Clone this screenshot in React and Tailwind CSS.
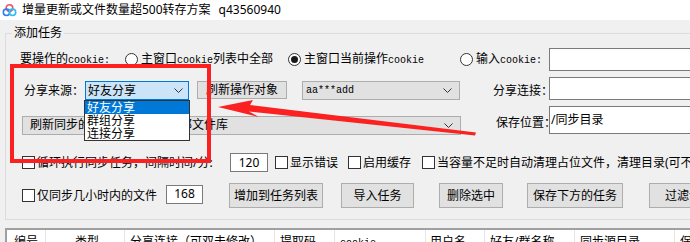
import React from "react";

const Mono = ({ children }) => (
  <span className="font-['Liberation_Mono'] text-[10px]">{children}</span>
);

const Chevron = () => (
  <svg width="9" height="5" viewBox="0 0 9 5" className="shrink-0">
    <polyline points="0.5,0.5 4.5,4.5 8.5,0.5" fill="none" stroke="#333" strokeWidth="1" />
  </svg>
);

const Radio = ({ checked, w, children }) => (
  <div className={`flex items-center shrink-0 ${w}`}>
    <span className="w-[13px] h-[13px] rounded-full border border-[#333] bg-white flex items-center justify-center shrink-0">
      {checked && <span className="w-[7px] h-[7px] rounded-full bg-[#1a1a1a]" />}
    </span>
    <span className="ml-[3px] whitespace-nowrap">{children}</span>
  </div>
);

const Check = ({ w, children }) => (
  <div className={`flex items-center shrink-0 ${w}`}>
    <span className="w-[13px] h-[13px] border border-[#333] bg-white shrink-0" />
    <span className="ml-[2px] whitespace-nowrap">{children}</span>
  </div>
);

const Btn = ({ cls, children }) => (
  <div className={`shrink-0 border border-[#adadad] bg-[#e1e1e1] flex items-center justify-center whitespace-nowrap ${cls}`}>
    {children}
  </div>
);

const headers = [
  { t: "编号", cls: "w-[39px] pl-[7px]" },
  { t: "类型", cls: "w-[79px] pl-[29px]" },
  { t: "分享连接（可双击修改）", cls: "w-[150px] pl-[5px]" },
  { t: "提取码", cls: "w-[60px] pl-[5px]" },
  { t: "cookie", cls: "w-[91px] pl-[5px]" },
  { t: "用户名", cls: "w-[59px] pl-[4px]" },
  { t: "好友/群名称", cls: "w-[90px] pl-[5px]" },
  { t: "同步源目录", cls: "w-[100px] pl-[5px]" },
  { t: "保存位置", cls: "w-[100px] pl-[5px]" },
];

export default function App() {
  return (
    <div className="relative w-[690px] h-[242px] overflow-hidden bg-[#f0f0f0] text-[12px] leading-[16px] text-black font-['Noto_Sans','Noto_Sans_CJK_SC',sans-serif]">
      {/* title bar */}
      <div className="h-[20px] bg-white flex items-center">
        <svg width="15" height="14" viewBox="0 0 15 14" className="ml-[2px]">
          <circle cx="7.5" cy="5" r="3.3" fill="none" stroke="#f0506e" strokeWidth="1.6" />
          <circle cx="4.5" cy="9.3" r="3.2" fill="none" stroke="#2b7ff2" strokeWidth="1.6" />
          <circle cx="10.5" cy="9.3" r="3.2" fill="none" stroke="#29c0f0" strokeWidth="1.6" />
        </svg>
        <span className="ml-[5px] whitespace-nowrap">增量更新或文件数量超500转存方案</span>
        <span className="ml-[8px]">q43560940</span>
      </div>

      {/* group box */}
      <fieldset className="ml-[5px] mt-[5px] w-[720px] border border-[#dcdcdc] pb-[11px] min-w-0">
        <legend className="ml-[6px] px-[2px] leading-[16px]">添加任务</legend>

        <div className="mt-[7px] h-[23px] flex items-center">
          <div className="ml-[14px] w-[105px] shrink-0 whitespace-nowrap">
            要操作的<Mono>cookie:</Mono>
          </div>
          <Radio w="w-[163px]">
            主窗口<Mono>cookie</Mono>列表中全部
          </Radio>
          <Radio w="w-[172px]" checked>
            主窗口当前操作<Mono>cookie</Mono>
          </Radio>
          <Radio w="w-[89px]">
            输入<Mono>cookie:</Mono>
          </Radio>
          <div className="w-[200px] h-[23px] shrink-0 bg-white border border-[#7a7a7a]" />
        </div>

        <div className="mt-[6px] h-[23px] flex items-end">
          <div className="ml-[18px] w-[61px] h-[19px] shrink-0 flex items-center whitespace-nowrap">分享来源：</div>
          <div className="w-[104px] h-[19px] shrink-0 bg-[#cce4f7] border border-[#0078d7] flex items-center justify-between pl-[2px] pr-[5px]">
            <span>好友分享</span>
            <Chevron />
          </div>
          <Btn cls="ml-[8px] w-[90px] h-[18px] mb-[1px]">刷新操作对象</Btn>
          <div className="ml-[15px] w-[158px] h-[19px] shrink-0 bg-[#e1e1e1] border border-[#adadad] flex items-center justify-between pl-[3px] pr-[7px]">
            <Mono>aa***add</Mono>
            <Chevron />
          </div>
          <div className="ml-[33px] w-[56px] h-[19px] shrink-0 flex items-center whitespace-nowrap">分享连接：</div>
          <div className="w-[200px] h-[23px] shrink-0 bg-white border border-[#7a7a7a]" />
        </div>

        <div className="mt-[6px] h-[29px] flex items-end">
          <div className="ml-[16px] w-[439px] h-[19px] shrink-0 bg-[#e1e1e1] border border-[#adadad] flex items-center justify-between pl-[7px] pr-[7px]">
            <span className="whitespace-nowrap">
              刷新同步的<Mono> cookie</Mono>的网盘全部文件库
            </span>
            <Chevron />
          </div>
          <div className="ml-[35px] w-[53px] h-[16px] mb-[4px] shrink-0 whitespace-nowrap">保存位置：</div>
          <div className="w-[200px] h-[28px] mb-[1px] shrink-0 bg-white border border-[#7a7a7a] flex items-center pl-[1px]">
            /同步目录
          </div>
        </div>

        <div className="mt-[18px] h-[19px] flex items-center">
          <div className="ml-[16px] flex shrink-0">
            <Check w="w-[208px]">循环执行同步任务，间隔时间/分:</Check>
          </div>
          <div className="w-[38px] h-[19px] shrink-0 bg-white border border-[#7a7a7a] flex items-center justify-center">120</div>
          <div className="ml-[7px] flex shrink-0">
            <Check w="w-[73px]">显示错误</Check>
            <Check w="w-[74px]">启用缓存</Check>
            <Check w="w-[300px]">当容量不足时自动清理占位文件，清理目录(可不填)</Check>
          </div>
        </div>

        <div className="mt-[11px] h-[25px] flex items-center">
          <div className="ml-[16px] flex shrink-0">
            <Check w="w-[144px]">仅同步几小时内的文件</Check>
          </div>
          <div className="w-[37px] h-[19px] mb-[3px] shrink-0 bg-white border border-[#7a7a7a] flex items-center justify-center">168</div>
          <Btn cls="ml-[26px] w-[94px] h-[25px]">增加到任务列表</Btn>
          <Btn cls="ml-[18px] w-[73px] h-[25px]">导入任务</Btn>
          <Btn cls="ml-[25px] w-[64px] h-[25px]">删除选中</Btn>
          <Btn cls="ml-[24px] w-[96px] h-[25px]">保存下方的任务</Btn>
          <Btn cls="ml-[26px] w-[80px] h-[25px]">过滤设置</Btn>
        </div>
      </fieldset>

      {/* task list header */}
      <div className="ml-[5px] mt-[8px] w-[720px] border-t-2 border-l-2 border-[#a0a0a0] bg-white flex h-[24px]">
        {headers.map((h) => (
          <div key={h.t} className={`shrink-0 border-r border-[#e5e5e5] pt-[4px] whitespace-nowrap ${h.cls}`}>
            {h.t === "cookie" ? <Mono>cookie</Mono> : h.t}
          </div>
        ))}
      </div>

      {/* opened dropdown list */}
      <div className="absolute left-[84px] top-[100px] w-[106px] h-[41px] bg-white border border-[#333] leading-[13px]">
        <div className="h-[13px] bg-[#0078d7] text-white pl-[2px]">好友分享</div>
        <div className="h-[13px] pl-[2px]">群组分享</div>
        <div className="h-[13px] pl-[2px]">连接分享</div>
      </div>

      {/* red annotation */}
      <div className="absolute left-[10px] top-[64px] w-[201px] h-[99px] border-4 border-[#fb2121] pointer-events-none" />
      <svg className="absolute left-0 top-0 pointer-events-none" width="690" height="242">
        <polygon
          points="218,107 253,100 250,105 476,132.5 475,135.5 249,111.5 259,117"
          fill="#fb2121"
        />
      </svg>
    </div>
  );
}
